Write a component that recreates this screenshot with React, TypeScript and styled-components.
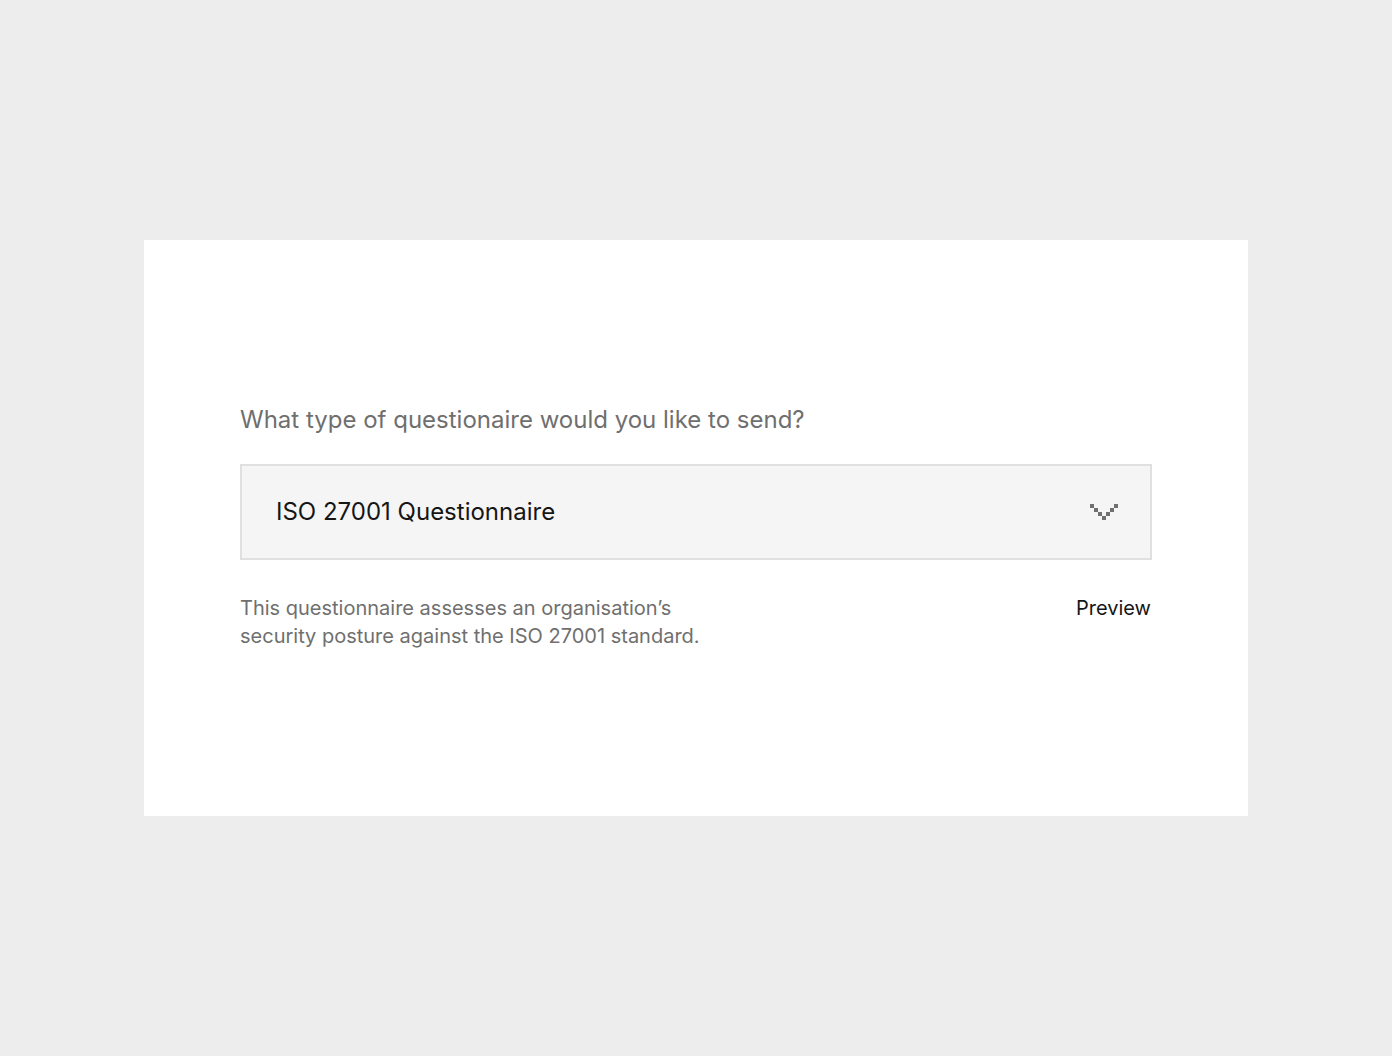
import React from "react";
import styled, { createGlobalStyle } from "styled-components";

const GlobalStyle = createGlobalStyle`
  html, body {
    margin: 0;
    padding: 0;
    background: #ededed;
    font-family: Inter, "Noto Sans", "Liberation Sans", sans-serif;
  }
  * { box-sizing: border-box; }
`;

const Page = styled.div`
  min-height: 100vh;
  display: flex;
  align-items: center;
  justify-content: center;
`;

const Card = styled.div`
  width: 1104px;
  height: 576px;
  background: #ffffff;
  padding: 164px 96px 0;
  display: flex;
  flex-direction: column;
`;

const Label = styled.div`
  font-size: 24px;
  line-height: 32px;
  color: #6f6f6f;
  margin-bottom: 28px;
`;

const Select = styled.button`
  width: 100%;
  height: 96px;
  background: #f5f5f5;
  border: 2px solid #e0e0e0;
  display: flex;
  align-items: center;
  justify-content: space-between;
  padding: 0 32px 0 34px;
  font-family: inherit;
  cursor: pointer;
`;

const SelectText = styled.span`
  font-size: 24px;
  line-height: 32px;
  padding-bottom: 1px;
  color: #161616;
`;

const Footer = styled.div`
  display: flex;
  justify-content: space-between;
  align-items: flex-start;
  margin-top: 34px;
`;

const Description = styled.p`
  margin: 0;
  width: 480px;
  font-size: 20px;
  line-height: 28px;
  color: #6f6f6f;
`;

const PreviewLink = styled.a`
  font-size: 20px;
  line-height: 28px;
  color: #161616;
  text-decoration: none;
  margin-right: 1px;
  cursor: pointer;
`;

const Chevron = () => (
  <svg width="28" height="16" viewBox="0 0 28 16" shapeRendering="crispEdges">
    {[
      [0, 0],
      [4, 4],
      [8, 8],
      [12, 12],
      [16, 8],
      [20, 4],
      [24, 0],
    ].map(([x, y]) => (
      <rect key={`${x}-${y}`} x={x} y={y} width="4" height="4" fill="#6f6f6f" />
    ))}
  </svg>
);

export default function App() {
  return (
    <>
      <GlobalStyle />
      <Page>
        <Card>
          <Label>What type of questionaire would you like to send?</Label>
          <Select type="button">
            <SelectText>ISO 27001 Questionnaire</SelectText>
            <Chevron />
          </Select>
          <Footer>
            <Description>
              This questionnaire assesses an organisation’s security posture against the ISO 27001 standard.
            </Description>
            <PreviewLink>Preview</PreviewLink>
          </Footer>
        </Card>
      </Page>
    </>
  );
}
